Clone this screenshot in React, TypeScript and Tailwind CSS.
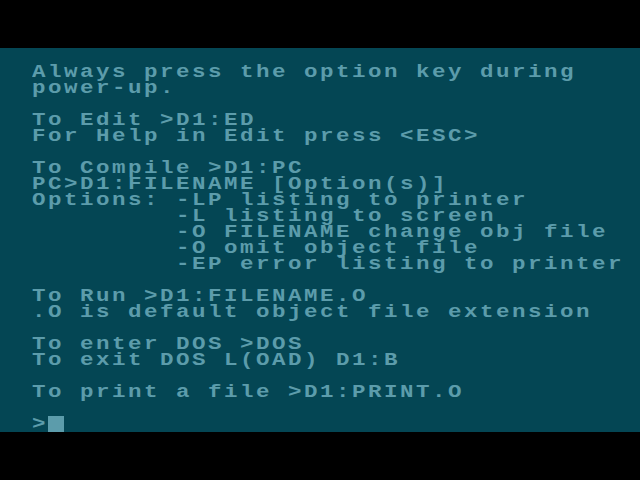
const lines = [
  "Always press the option key during",
  "power-up.",
  "",
  "To Edit >D1:ED",
  "For Help in Edit press <ESC>",
  "",
  "To Compile >D1:PC",
  "PC>D1:FILENAME [Option(s)]",
  "Options: -LP listing to printer",
  "         -L listing to screen",
  "         -O FILENAME change obj file",
  "         -O omit object file",
  "         -EP error listing to printer",
  "",
  "To Run >D1:FILENAME.O",
  ".O is default object file extension",
  "",
  "To enter DOS >DOS",
  "To exit DOS L(OAD) D1:B",
  "",
  "To print a file >D1:PRINT.O",
  "",
];

const Row = ({ text }: { text: string }) => (
  <div className="w-[460px] h-[16px] pt-[1px] leading-[15px] whitespace-pre origin-left scale-x-[1.25] text-[18px] font-bold tracking-[2px] font-['Liberation_Mono',monospace]">
    {text}
  </div>
);

export default function App() {
  return (
    <div className="w-[640px] h-[480px] bg-black flex flex-col">
      <div className="h-[48px]" />
      <div className="h-[384px] bg-[#044654] text-[#5c9cab] pt-[16px] px-[32px]">
        {lines.map((l, i) => (
          <Row key={i} text={l} />
        ))}
        <div className="h-[16px] flex">
          <div className="w-[16px] h-[16px] pt-[1px] leading-[15px] origin-left scale-x-[1.25] text-[18px] font-bold font-['Liberation_Mono',monospace]">
            &gt;
          </div>
          <div className="w-[16px] h-[16px] bg-[#5c9cab]" />
        </div>
      </div>
      <div className="h-[48px]" />
    </div>
  );
}
